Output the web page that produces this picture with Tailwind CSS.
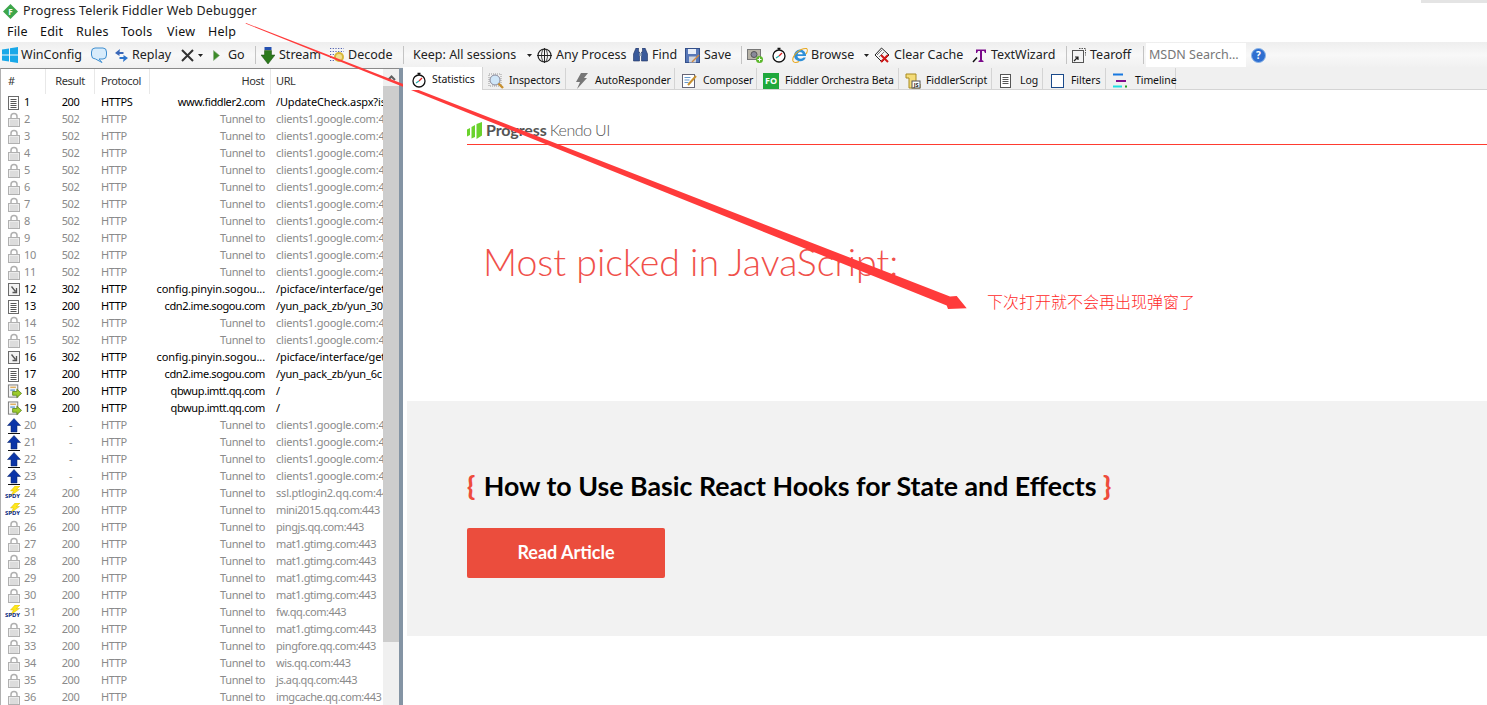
<!DOCTYPE html>
<html lang="en">
<head>
<meta charset="utf-8">
<title>Progress Telerik Fiddler Web Debugger</title>
<script src="https://cdn.jsdelivr.net/npm/@tailwindcss/browser@4"></script>
</head>
<body class="relative w-[1487px] h-[705px] overflow-hidden bg-white font-['Noto_Sans',sans-serif] text-black">
<svg class="absolute w-0 h-0" aria-hidden="true">
  <defs>
    <symbol id="doc" viewBox="0 0 14 14"><rect x="1.5" y="0.5" width="10" height="13" fill="#fff" stroke="#6b6b6b"/><path d="M3.5 3.5h6M3.5 5.5h6M3.5 7.5h6M3.5 9.5h6M3.5 11.5h6" stroke="#555"/></symbol>
    <symbol id="lock" viewBox="0 0 14 15"><path d="M4 7V4.500a3 3 0 0 1 6 0V7" fill="none" stroke="#b0b0b0" stroke-width="1.500"/><rect x="1.500" y="6.500" width="11" height="8" fill="#ececec" stroke="#b0b0b0"/><path d="M3 9h8M3 11h8M3 13h8" stroke="#cccccc"/></symbol>
    <symbol id="redir" viewBox="0 0 14 14"><rect x="1.500" y="0.500" width="11" height="12" fill="#f2f2f2" stroke="#6b6b6b"/><path d="M4.500 3.500 8.500 8.500M9.500 5v4.500H5.500" fill="none" stroke="#555" stroke-width="1.300"/></symbol>
    <symbol id="post" viewBox="0 0 16 15"><rect x="1.500" y="0.500" width="10" height="13" fill="#f4f4f4" stroke="#777"/><path d="M3.500 3h6" stroke="#e0b060" stroke-width="1.500"/><path d="M3.500 6h5" stroke="#6aa0d8" stroke-width="1.500"/><path d="M6 7.500h4.500V5l5 4.500-5 4.500v-2.500H6z" fill="#9ccc2c" stroke="#527a10" stroke-width=".8"/></symbol>
    <symbol id="up" viewBox="0 0 14 16"><path d="M7 0.500 13.500 7.500H10V14H4V7.500H0.500z" fill="#0b35a8" stroke="#06205f" stroke-width=".5"/><path d="M1 15.500h12" stroke="#111"/></symbol>
    <symbol id="bolt" viewBox="0 0 14 10"><path d="M8 0 13 0 9.500 3.500 12.500 3.500 3.500 10 6.500 5 3.500 5z" fill="#ffe81a" stroke="#caa800" stroke-width=".4"/></symbol>
    <symbol id="clock" viewBox="0 0 16 16"><circle cx="8" cy="9" r="6" fill="#fff" stroke="#111" stroke-width="1.300"/><path d="M6.500 1.500h3M8 1.500V3" stroke="#111" stroke-width="1.300"/><path d="M8 9 11 6" stroke="#d22" stroke-width="1.200"/><path d="M8 9 5 11" stroke="#2aa" stroke-width="1.200"/></symbol>
  </defs>
</svg>

<header class="h-[22px] flex items-center pl-[3px] pt-px">
  <svg class="w-[15px] h-[15px] shrink-0" viewBox="0 0 15 15"><path d="M7.500 0 15 7.500 7.500 15 0 7.500z" fill="#3da64a"/><text x="7.500" y="10.500" font-size="8" font-weight="700" fill="#fff" text-anchor="middle">F</text></svg>
  <span class="ml-[5px] text-[12.5px] tracking-[0.13px] whitespace-nowrap text-[#222]">Progress Telerik Fiddler Web Debugger</span>
</header>

<nav class="h-[20px] flex items-center pt-px text-[12.5px] tracking-[0.2px] text-[#111]">
  <span class="ml-[7px] w-[33px]">File</span>
  <span class="w-[36px]">Edit</span>
  <span class="w-[45px]">Rules</span>
  <span class="w-[46px]">Tools</span>
  <span class="w-[41px]">View</span>
  <span>Help</span>
</nav>

<div class="h-[26px] flex items-center bg-gradient-to-b from-[#eeeeee] via-[#f8f8f8] to-[#f0f0f0] text-[12.5px] tracking-[0px] text-[#222] whitespace-nowrap">
  <svg class="ml-[2px] w-[16px] h-[16px] shrink-0" viewBox="0 0 16 16"><path d="M0 2.500 7 1.500V7.500H0zM8 1.300 16 0V7.500H8zM0 8.500H7V14.500L0 13.500zM8 8.500H16V16L8 14.700z" fill="#19a8e8"/></svg>
  <span class="ml-[3px] w-[60px]">WinConfig</span>
  <svg class="ml-[10px] w-[16px] h-[16px] shrink-0" viewBox="0 0 16 16"><path d="M4 1H12Q15.500 1 15.500 5V8Q15.500 12 12 12H8L11 15.500 4.500 12Q.5 12 .5 8V5Q.5 1 4 1z" fill="#d8ecfb" stroke="#3e8ed0"/></svg>
  <svg class="ml-[7px] w-[15px] h-[15px] shrink-0" viewBox="0 0 15 15"><path d="M6 1 1 5l4.500 3V6h4V4H5.500z" fill="#3a68b8"/><path d="M9 14l5-4-4.500-3v2h-4v2h4z" fill="#2c74cc"/></svg>
  <span class="ml-[3px] w-[40px]">Replay</span>
  <svg class="ml-[9px] w-[13px] h-[13px] shrink-0" viewBox="0 0 13 13"><path d="M1 1 12 12M12 1 1 12" stroke="#333" stroke-width="2"/></svg>
  <svg class="ml-[4px] w-[5px] h-[3px] shrink-0" viewBox="0 0 5 3"><path d="M0 0H5L2.500 3z" fill="#222"/></svg>
  <svg class="ml-[10px] w-[7px] h-[11px] shrink-0" viewBox="0 0 7 11"><path d="M0.500 0.500 6.500 5.500 0.500 10.500z" fill="#3c8a28" stroke="#8ab080" stroke-width=".6"/></svg>
  <span class="ml-[8px] w-[17px]">Go</span>
  <span class="ml-[10px] w-px h-[18px] bg-[#c4c4c4] shrink-0"></span>
  <svg class="ml-[5px] w-[14px] h-[17px] shrink-0" viewBox="0 0 14 17"><path d="M3.500 0h7v3h-7z" fill="#2450b0"/><path d="M3.500 3.500h7V8H14L7 17 0 8H3.500z" fill="#2c7a1c" stroke="#1a4a10" stroke-width=".5"/></svg>
  <span class="ml-[4px] w-[42px]">Stream</span>
  <svg class="ml-[8px] w-[16px] h-[16px] shrink-0" viewBox="0 0 16 16"><path d="M1 1.500h14M1 4.500h14M1 7.500h4M1 10.500h4M1 13.500h4" stroke="#5060b0" stroke-width="1.200" stroke-dasharray="1.200 1.500"/><circle cx="10" cy="10" r="5" fill="#d8b83a"/><circle cx="10" cy="10" r="3" fill="#f0e090"/></svg>
  <span class="ml-[3px] w-[45px]">Decode</span>
  <span class="ml-[10px] w-px h-[18px] bg-[#c4c4c4] shrink-0"></span>
  <span class="ml-[9px] w-[105px]">Keep: All sessions</span>
  <svg class="ml-[9px] w-[5px] h-[3px] shrink-0" viewBox="0 0 5 3"><path d="M0 0H5L2.500 3z" fill="#222"/></svg>
  <svg class="ml-[5px] w-[15px] h-[15px] shrink-0" viewBox="0 0 15 15"><circle cx="7.500" cy="7.500" r="6.500" fill="none" stroke="#222" stroke-width="1.200"/><path d="M0 7.500h15M7.500 0v15" stroke="#222"/><ellipse cx="7.500" cy="7.500" rx="3" ry="6.500" fill="none" stroke="#222" stroke-width=".8"/></svg>
  <span class="ml-[4px] w-[71px]">Any Process</span>
  <svg class="ml-[6px] w-[15px] h-[14px] shrink-0" viewBox="0 0 15 14"><path d="M3 0h2.500v4H6.500V13H.5V6zM12 0H9.500v4H8.500V13h6V6z" fill="#3a5a9a" stroke="#1e3060" stroke-width=".6"/><path d="M6.500 5h2v3h-2z" fill="#9ab"/></svg>
  <span class="ml-[4px] w-[24px]">Find</span>
  <svg class="ml-[9px] w-[15px] h-[15px] shrink-0" viewBox="0 0 15 15"><rect x=".5" y=".5" width="14" height="14" fill="#5878b8" stroke="#34508a"/><rect x="3" y="1" width="8" height="5" fill="#e8eef8"/><rect x="4" y="8.500" width="7" height="6" fill="#d0d4dc"/><path d="M7 14l7-7" stroke="#c84" stroke-width="1.400"/></svg>
  <span class="ml-[4px] w-[27px]">Save</span>
  <span class="ml-[10px] w-px h-[18px] bg-[#c4c4c4] shrink-0"></span>
  <svg class="ml-[5px] w-[16px] h-[16px] shrink-0" viewBox="0 0 16 16"><rect x=".5" y="2.500" width="13" height="10" fill="#b8b4a8" stroke="#777"/><circle cx="7" cy="7.500" r="3" fill="#889" stroke="#555"/><circle cx="12.500" cy="12.500" r="3.500" fill="#5cb82c"/><path d="M10.500 12.500h4M12.500 10.500v4" stroke="#fff"/></svg>
  <svg class="ml-[8px] w-[16px] h-[16px] shrink-0"><use href="#clock"/></svg>
  <svg class="ml-[5px] w-[16px] h-[16px] shrink-0" viewBox="0 0 16 16"><path d="M8 2.500a6 6 0 0 1 6 6.500H5.500c0 3 4 3.500 6 1.500h2.300A6.200 6.200 0 0 1 2 9c0-3.500 2.800-6.500 6-6.500z" fill="#2f90d8"/><path d="M5.700 7.300h5c-.3-2.600-4.400-2.600-5 0z" fill="#fff"/><path d="M1 14C-.5 9 8 1 14.500 1.500c1.500 1 .5 4-.5 5.500M1 14c1 2 4 1.500 6 .5" fill="none" stroke="#e8a820" stroke-width="1.100"/></svg>
  <span class="ml-[3px] w-[44px]">Browse</span>
  <svg class="ml-[9px] w-[5px] h-[3px] shrink-0" viewBox="0 0 5 3"><path d="M0 0H5L2.500 3z" fill="#222"/></svg>
  <svg class="ml-[5px] w-[16px] h-[16px] shrink-0" viewBox="0 0 16 16"><path d="M7.500 1 15 8 8 15 1 8z" fill="#f4f4f4" stroke="#222"/><path d="M3 8l5-5M5 10l5-5" stroke="#777"/><path d="M7 8l7 7M14 8l-7 7" stroke="#d01818" stroke-width="2"/></svg>
  <span class="ml-[4px] w-[69px]">Clear Cache</span>
  <svg class="ml-[9px] w-[15px] h-[15px] shrink-0" viewBox="0 0 15 15"><path d="M4 1.500h10V5h-1L12 3h-2v9l1.500 1v1H6.500v-1L8 12V3H6L5 5H4z" fill="#7a0a8a"/><path d="M5 9.500 1 14" stroke="#111" stroke-width="1.500"/></svg>
  <span class="ml-[4px] w-[64px]">TextWizard</span>
  <span class="ml-[11px] w-px h-[18px] bg-[#c4c4c4] shrink-0"></span>
  <svg class="ml-[5px] w-[14px] h-[15px] shrink-0" viewBox="0 0 14 15"><rect x=".5" y="2.500" width="11" height="12" fill="#f4f4f4" stroke="#555"/><path d="M7 .5h6.500v7" fill="none" stroke="#555" stroke-dasharray="1.500 1"/><path d="M2 13 6 9M3 9h3v3" fill="none" stroke="#222" stroke-width="1.200"/></svg>
  <span class="ml-[4px] w-[43px]">Tearoff</span>
  <span class="ml-[10px] w-px h-[18px] bg-[#c4c4c4] shrink-0"></span>
  <span class="ml-[2px] w-[100px] h-[24px] leading-[24px] bg-white pl-[3px] text-[#777]">MSDN Search...</span>
  <svg class="ml-[5px] w-[15px] h-[15px] shrink-0" viewBox="0 0 15 15"><circle cx="7.500" cy="7.500" r="7" fill="#2f6fd0" stroke="#8ab4e8"/><text x="7.500" y="11" font-size="10" font-weight="700" fill="#fff" text-anchor="middle">?</text></svg>
</div>

<main class="h-[637px] flex">
  <section class="w-[399px] shrink-0 flex flex-col border-t border-t-[#8a8a8a] border-l border-l-[#b0b0b0] relative overflow-hidden text-[11px] tracking-[-0.4px]">
    <div class="h-[25px] shrink-0 grid grid-cols-[45px_49px_55px_121px_112px] items-center text-[#333]">
      <span class="pl-[7px] h-full flex items-center border-r border-[#e8e8e8]">#</span>
      <span class="h-full flex items-center justify-center border-r border-[#e8e8e8]">Result</span>
      <span class="pl-[6px] h-full flex items-center border-r border-[#e8e8e8]">Protocol</span>
      <span class="pr-[6px] h-full flex items-center justify-end border-r border-[#e8e8e8]">Host</span>
      <span class="pl-[5px]">URL</span>
    </div>
    <div class="flex-1 w-[382px] overflow-hidden">
      <div class="h-[17px] grid grid-cols-[45px_49px_55px_121px_112px] items-center whitespace-nowrap"><span class="flex items-center pl-[6px]"><svg class="w-[14px] h-[14px] shrink-0"><use href="#doc"/></svg><span class="ml-[3px]">1</span></span><span class="text-center">200</span><span class="pl-[6px]">HTTPS</span><span class="pr-[6px] text-right">www.fiddler2.com</span><span class="pl-[5px] overflow-hidden tracking-[-0.15px]">/UpdateCheck.aspx?isBeta=False</span></div>
      <div class="h-[17px] grid grid-cols-[45px_49px_55px_121px_112px] items-center whitespace-nowrap text-[#8a8a8a]"><span class="flex items-center pl-[6px]"><svg class="w-[14px] h-[15px] shrink-0"><use href="#lock"/></svg><span class="ml-[3px]">2</span></span><span class="text-center">502</span><span class="pl-[6px]">HTTP</span><span class="pr-[6px] text-right">Tunnel to</span><span class="pl-[5px] overflow-hidden tracking-[-0.2px]">clients1.google.com:443</span></div>
      <div class="h-[17px] grid grid-cols-[45px_49px_55px_121px_112px] items-center whitespace-nowrap text-[#8a8a8a]"><span class="flex items-center pl-[6px]"><svg class="w-[14px] h-[15px] shrink-0"><use href="#lock"/></svg><span class="ml-[3px]">3</span></span><span class="text-center">502</span><span class="pl-[6px]">HTTP</span><span class="pr-[6px] text-right">Tunnel to</span><span class="pl-[5px] overflow-hidden tracking-[-0.2px]">clients1.google.com:443</span></div>
      <div class="h-[17px] grid grid-cols-[45px_49px_55px_121px_112px] items-center whitespace-nowrap text-[#8a8a8a]"><span class="flex items-center pl-[6px]"><svg class="w-[14px] h-[15px] shrink-0"><use href="#lock"/></svg><span class="ml-[3px]">4</span></span><span class="text-center">502</span><span class="pl-[6px]">HTTP</span><span class="pr-[6px] text-right">Tunnel to</span><span class="pl-[5px] overflow-hidden tracking-[-0.2px]">clients1.google.com:443</span></div>
      <div class="h-[17px] grid grid-cols-[45px_49px_55px_121px_112px] items-center whitespace-nowrap text-[#8a8a8a]"><span class="flex items-center pl-[6px]"><svg class="w-[14px] h-[15px] shrink-0"><use href="#lock"/></svg><span class="ml-[3px]">5</span></span><span class="text-center">502</span><span class="pl-[6px]">HTTP</span><span class="pr-[6px] text-right">Tunnel to</span><span class="pl-[5px] overflow-hidden tracking-[-0.2px]">clients1.google.com:443</span></div>
      <div class="h-[17px] grid grid-cols-[45px_49px_55px_121px_112px] items-center whitespace-nowrap text-[#8a8a8a]"><span class="flex items-center pl-[6px]"><svg class="w-[14px] h-[15px] shrink-0"><use href="#lock"/></svg><span class="ml-[3px]">6</span></span><span class="text-center">502</span><span class="pl-[6px]">HTTP</span><span class="pr-[6px] text-right">Tunnel to</span><span class="pl-[5px] overflow-hidden tracking-[-0.2px]">clients1.google.com:443</span></div>
      <div class="h-[17px] grid grid-cols-[45px_49px_55px_121px_112px] items-center whitespace-nowrap text-[#8a8a8a]"><span class="flex items-center pl-[6px]"><svg class="w-[14px] h-[15px] shrink-0"><use href="#lock"/></svg><span class="ml-[3px]">7</span></span><span class="text-center">502</span><span class="pl-[6px]">HTTP</span><span class="pr-[6px] text-right">Tunnel to</span><span class="pl-[5px] overflow-hidden tracking-[-0.2px]">clients1.google.com:443</span></div>
      <div class="h-[17px] grid grid-cols-[45px_49px_55px_121px_112px] items-center whitespace-nowrap text-[#8a8a8a]"><span class="flex items-center pl-[6px]"><svg class="w-[14px] h-[15px] shrink-0"><use href="#lock"/></svg><span class="ml-[3px]">8</span></span><span class="text-center">502</span><span class="pl-[6px]">HTTP</span><span class="pr-[6px] text-right">Tunnel to</span><span class="pl-[5px] overflow-hidden tracking-[-0.2px]">clients1.google.com:443</span></div>
      <div class="h-[17px] grid grid-cols-[45px_49px_55px_121px_112px] items-center whitespace-nowrap text-[#8a8a8a]"><span class="flex items-center pl-[6px]"><svg class="w-[14px] h-[15px] shrink-0"><use href="#lock"/></svg><span class="ml-[3px]">9</span></span><span class="text-center">502</span><span class="pl-[6px]">HTTP</span><span class="pr-[6px] text-right">Tunnel to</span><span class="pl-[5px] overflow-hidden tracking-[-0.2px]">clients1.google.com:443</span></div>
      <div class="h-[17px] grid grid-cols-[45px_49px_55px_121px_112px] items-center whitespace-nowrap text-[#8a8a8a]"><span class="flex items-center pl-[6px]"><svg class="w-[14px] h-[15px] shrink-0"><use href="#lock"/></svg><span class="ml-[3px]">10</span></span><span class="text-center">502</span><span class="pl-[6px]">HTTP</span><span class="pr-[6px] text-right">Tunnel to</span><span class="pl-[5px] overflow-hidden tracking-[-0.2px]">clients1.google.com:443</span></div>
      <div class="h-[17px] grid grid-cols-[45px_49px_55px_121px_112px] items-center whitespace-nowrap text-[#8a8a8a]"><span class="flex items-center pl-[6px]"><svg class="w-[14px] h-[15px] shrink-0"><use href="#lock"/></svg><span class="ml-[3px]">11</span></span><span class="text-center">502</span><span class="pl-[6px]">HTTP</span><span class="pr-[6px] text-right">Tunnel to</span><span class="pl-[5px] overflow-hidden tracking-[-0.2px]">clients1.google.com:443</span></div>
      <div class="h-[17px] grid grid-cols-[45px_49px_55px_121px_112px] items-center whitespace-nowrap"><span class="flex items-center pl-[6px]"><svg class="w-[14px] h-[14px] shrink-0"><use href="#redir"/></svg><span class="ml-[3px]">12</span></span><span class="text-center">302</span><span class="pl-[6px]">HTTP</span><span class="pr-[6px] text-right tracking-[-0.1px]">config.pinyin.sogou...</span><span class="pl-[5px] overflow-hidden tracking-[-0.1px]">/picface/interface/get_info</span></div>
      <div class="h-[17px] grid grid-cols-[45px_49px_55px_121px_112px] items-center whitespace-nowrap"><span class="flex items-center pl-[6px]"><svg class="w-[14px] h-[14px] shrink-0"><use href="#doc"/></svg><span class="ml-[3px]">13</span></span><span class="text-center">200</span><span class="pl-[6px]">HTTP</span><span class="pr-[6px] text-right">cdn2.ime.sogou.com</span><span class="pl-[5px] overflow-hidden tracking-[-0.15px]">/yun_pack_zb/yun_30a1b2c4</span></div>
      <div class="h-[17px] grid grid-cols-[45px_49px_55px_121px_112px] items-center whitespace-nowrap text-[#8a8a8a]"><span class="flex items-center pl-[6px]"><svg class="w-[14px] h-[15px] shrink-0"><use href="#lock"/></svg><span class="ml-[3px]">14</span></span><span class="text-center">502</span><span class="pl-[6px]">HTTP</span><span class="pr-[6px] text-right">Tunnel to</span><span class="pl-[5px] overflow-hidden tracking-[-0.2px]">clients1.google.com:443</span></div>
      <div class="h-[17px] grid grid-cols-[45px_49px_55px_121px_112px] items-center whitespace-nowrap text-[#8a8a8a]"><span class="flex items-center pl-[6px]"><svg class="w-[14px] h-[15px] shrink-0"><use href="#lock"/></svg><span class="ml-[3px]">15</span></span><span class="text-center">502</span><span class="pl-[6px]">HTTP</span><span class="pr-[6px] text-right">Tunnel to</span><span class="pl-[5px] overflow-hidden tracking-[-0.2px]">clients1.google.com:443</span></div>
      <div class="h-[17px] grid grid-cols-[45px_49px_55px_121px_112px] items-center whitespace-nowrap"><span class="flex items-center pl-[6px]"><svg class="w-[14px] h-[14px] shrink-0"><use href="#redir"/></svg><span class="ml-[3px]">16</span></span><span class="text-center">302</span><span class="pl-[6px]">HTTP</span><span class="pr-[6px] text-right tracking-[-0.1px]">config.pinyin.sogou...</span><span class="pl-[5px] overflow-hidden tracking-[-0.1px]">/picface/interface/get_info</span></div>
      <div class="h-[17px] grid grid-cols-[45px_49px_55px_121px_112px] items-center whitespace-nowrap"><span class="flex items-center pl-[6px]"><svg class="w-[14px] h-[14px] shrink-0"><use href="#doc"/></svg><span class="ml-[3px]">17</span></span><span class="text-center">200</span><span class="pl-[6px]">HTTP</span><span class="pr-[6px] text-right">cdn2.ime.sogou.com</span><span class="pl-[5px] overflow-hidden tracking-[-0.15px]">/yun_pack_zb/yun_6c1d2e3f</span></div>
      <div class="h-[17px] grid grid-cols-[45px_49px_55px_121px_112px] items-center whitespace-nowrap"><span class="flex items-center pl-[6px]"><svg class="w-[15px] h-[15px] shrink-0"><use href="#post"/></svg><span class="ml-[2px]">18</span></span><span class="text-center">200</span><span class="pl-[6px]">HTTP</span><span class="pr-[6px] text-right">qbwup.imtt.qq.com</span><span class="pl-[5px] overflow-hidden">/</span></div>
      <div class="h-[17px] grid grid-cols-[45px_49px_55px_121px_112px] items-center whitespace-nowrap"><span class="flex items-center pl-[6px]"><svg class="w-[15px] h-[15px] shrink-0"><use href="#post"/></svg><span class="ml-[2px]">19</span></span><span class="text-center">200</span><span class="pl-[6px]">HTTP</span><span class="pr-[6px] text-right">qbwup.imtt.qq.com</span><span class="pl-[5px] overflow-hidden">/</span></div>
      <div class="h-[17px] grid grid-cols-[45px_49px_55px_121px_112px] items-center whitespace-nowrap text-[#8a8a8a]"><span class="flex items-center pl-[6px]"><svg class="w-[14px] h-[16px] shrink-0"><use href="#up"/></svg><span class="ml-[3px]">20</span></span><span class="text-center">-</span><span class="pl-[6px]">HTTP</span><span class="pr-[6px] text-right">Tunnel to</span><span class="pl-[5px] overflow-hidden tracking-[-0.2px]">clients1.google.com:443</span></div>
      <div class="h-[17px] grid grid-cols-[45px_49px_55px_121px_112px] items-center whitespace-nowrap text-[#8a8a8a]"><span class="flex items-center pl-[6px]"><svg class="w-[14px] h-[16px] shrink-0"><use href="#up"/></svg><span class="ml-[3px]">21</span></span><span class="text-center">-</span><span class="pl-[6px]">HTTP</span><span class="pr-[6px] text-right">Tunnel to</span><span class="pl-[5px] overflow-hidden tracking-[-0.2px]">clients1.google.com:443</span></div>
      <div class="h-[17px] grid grid-cols-[45px_49px_55px_121px_112px] items-center whitespace-nowrap text-[#8a8a8a]"><span class="flex items-center pl-[6px]"><svg class="w-[14px] h-[16px] shrink-0"><use href="#up"/></svg><span class="ml-[3px]">22</span></span><span class="text-center">-</span><span class="pl-[6px]">HTTP</span><span class="pr-[6px] text-right">Tunnel to</span><span class="pl-[5px] overflow-hidden tracking-[-0.2px]">clients1.google.com:443</span></div>
      <div class="h-[17px] grid grid-cols-[45px_49px_55px_121px_112px] items-center whitespace-nowrap text-[#8a8a8a]"><span class="flex items-center pl-[6px]"><svg class="w-[14px] h-[16px] shrink-0"><use href="#up"/></svg><span class="ml-[3px]">23</span></span><span class="text-center">-</span><span class="pl-[6px]">HTTP</span><span class="pr-[6px] text-right">Tunnel to</span><span class="pl-[5px] overflow-hidden tracking-[-0.2px]">clients1.google.com:443</span></div>
      <div class="h-[17px] grid grid-cols-[45px_49px_55px_121px_112px] items-center whitespace-nowrap text-[#8a8a8a]"><span class="flex items-center pl-[4px]"><span class="relative w-[17px] h-[15px] shrink-0"><svg class="absolute left-[2px] top-0 w-[14px] h-[10px]"><use href="#bolt"/></svg><span class="absolute left-0 top-[5px] text-[6px] leading-[10px] tracking-normal font-bold text-[#0a2a80]">SPDY</span></span><span class="ml-[2px]">24</span></span><span class="text-center">200</span><span class="pl-[6px]">HTTP</span><span class="pr-[6px] text-right">Tunnel to</span><span class="pl-[5px] overflow-hidden tracking-[-0.2px]">ssl.ptlogin2.qq.com:443</span></div>
      <div class="h-[17px] grid grid-cols-[45px_49px_55px_121px_112px] items-center whitespace-nowrap text-[#8a8a8a]"><span class="flex items-center pl-[4px]"><span class="relative w-[17px] h-[15px] shrink-0"><svg class="absolute left-[2px] top-0 w-[14px] h-[10px]"><use href="#bolt"/></svg><span class="absolute left-0 top-[5px] text-[6px] leading-[10px] tracking-normal font-bold text-[#0a2a80]">SPDY</span></span><span class="ml-[2px]">25</span></span><span class="text-center">200</span><span class="pl-[6px]">HTTP</span><span class="pr-[6px] text-right">Tunnel to</span><span class="pl-[5px] overflow-hidden">mini2015.qq.com:443</span></div>
      <div class="h-[17px] grid grid-cols-[45px_49px_55px_121px_112px] items-center whitespace-nowrap text-[#8a8a8a]"><span class="flex items-center pl-[6px]"><svg class="w-[14px] h-[15px] shrink-0"><use href="#lock"/></svg><span class="ml-[3px]">26</span></span><span class="text-center">200</span><span class="pl-[6px]">HTTP</span><span class="pr-[6px] text-right">Tunnel to</span><span class="pl-[5px] overflow-hidden">pingjs.qq.com:443</span></div>
      <div class="h-[17px] grid grid-cols-[45px_49px_55px_121px_112px] items-center whitespace-nowrap text-[#8a8a8a]"><span class="flex items-center pl-[6px]"><svg class="w-[14px] h-[15px] shrink-0"><use href="#lock"/></svg><span class="ml-[3px]">27</span></span><span class="text-center">200</span><span class="pl-[6px]">HTTP</span><span class="pr-[6px] text-right">Tunnel to</span><span class="pl-[5px] overflow-hidden">mat1.gtimg.com:443</span></div>
      <div class="h-[17px] grid grid-cols-[45px_49px_55px_121px_112px] items-center whitespace-nowrap text-[#8a8a8a]"><span class="flex items-center pl-[6px]"><svg class="w-[14px] h-[15px] shrink-0"><use href="#lock"/></svg><span class="ml-[3px]">28</span></span><span class="text-center">200</span><span class="pl-[6px]">HTTP</span><span class="pr-[6px] text-right">Tunnel to</span><span class="pl-[5px] overflow-hidden">mat1.gtimg.com:443</span></div>
      <div class="h-[17px] grid grid-cols-[45px_49px_55px_121px_112px] items-center whitespace-nowrap text-[#8a8a8a]"><span class="flex items-center pl-[6px]"><svg class="w-[14px] h-[15px] shrink-0"><use href="#lock"/></svg><span class="ml-[3px]">29</span></span><span class="text-center">200</span><span class="pl-[6px]">HTTP</span><span class="pr-[6px] text-right">Tunnel to</span><span class="pl-[5px] overflow-hidden">mat1.gtimg.com:443</span></div>
      <div class="h-[17px] grid grid-cols-[45px_49px_55px_121px_112px] items-center whitespace-nowrap text-[#8a8a8a]"><span class="flex items-center pl-[6px]"><svg class="w-[14px] h-[15px] shrink-0"><use href="#lock"/></svg><span class="ml-[3px]">30</span></span><span class="text-center">200</span><span class="pl-[6px]">HTTP</span><span class="pr-[6px] text-right">Tunnel to</span><span class="pl-[5px] overflow-hidden">mat1.gtimg.com:443</span></div>
      <div class="h-[17px] grid grid-cols-[45px_49px_55px_121px_112px] items-center whitespace-nowrap text-[#8a8a8a]"><span class="flex items-center pl-[4px]"><span class="relative w-[17px] h-[15px] shrink-0"><svg class="absolute left-[2px] top-0 w-[14px] h-[10px]"><use href="#bolt"/></svg><span class="absolute left-0 top-[5px] text-[6px] leading-[10px] tracking-normal font-bold text-[#0a2a80]">SPDY</span></span><span class="ml-[2px]">31</span></span><span class="text-center">200</span><span class="pl-[6px]">HTTP</span><span class="pr-[6px] text-right">Tunnel to</span><span class="pl-[5px] overflow-hidden">fw.qq.com:443</span></div>
      <div class="h-[17px] grid grid-cols-[45px_49px_55px_121px_112px] items-center whitespace-nowrap text-[#8a8a8a]"><span class="flex items-center pl-[6px]"><svg class="w-[14px] h-[15px] shrink-0"><use href="#lock"/></svg><span class="ml-[3px]">32</span></span><span class="text-center">200</span><span class="pl-[6px]">HTTP</span><span class="pr-[6px] text-right">Tunnel to</span><span class="pl-[5px] overflow-hidden">mat1.gtimg.com:443</span></div>
      <div class="h-[17px] grid grid-cols-[45px_49px_55px_121px_112px] items-center whitespace-nowrap text-[#8a8a8a]"><span class="flex items-center pl-[6px]"><svg class="w-[14px] h-[15px] shrink-0"><use href="#lock"/></svg><span class="ml-[3px]">33</span></span><span class="text-center">200</span><span class="pl-[6px]">HTTP</span><span class="pr-[6px] text-right">Tunnel to</span><span class="pl-[5px] overflow-hidden">pingfore.qq.com:443</span></div>
      <div class="h-[17px] grid grid-cols-[45px_49px_55px_121px_112px] items-center whitespace-nowrap text-[#8a8a8a]"><span class="flex items-center pl-[6px]"><svg class="w-[14px] h-[15px] shrink-0"><use href="#lock"/></svg><span class="ml-[3px]">34</span></span><span class="text-center">200</span><span class="pl-[6px]">HTTP</span><span class="pr-[6px] text-right">Tunnel to</span><span class="pl-[5px] overflow-hidden">wis.qq.com:443</span></div>
      <div class="h-[17px] grid grid-cols-[45px_49px_55px_121px_112px] items-center whitespace-nowrap text-[#8a8a8a]"><span class="flex items-center pl-[6px]"><svg class="w-[14px] h-[15px] shrink-0"><use href="#lock"/></svg><span class="ml-[3px]">35</span></span><span class="text-center">200</span><span class="pl-[6px]">HTTP</span><span class="pr-[6px] text-right">Tunnel to</span><span class="pl-[5px] overflow-hidden">js.aq.qq.com:443</span></div>
      <div class="h-[17px] grid grid-cols-[45px_49px_55px_121px_112px] items-center whitespace-nowrap text-[#8a8a8a]"><span class="flex items-center pl-[6px]"><svg class="w-[14px] h-[15px] shrink-0"><use href="#lock"/></svg><span class="ml-[3px]">36</span></span><span class="text-center">200</span><span class="pl-[6px]">HTTP</span><span class="pr-[6px] text-right">Tunnel to</span><span class="pl-[5px] overflow-hidden">imgcache.qq.com:443</span></div>
    </div>
    <div class="absolute right-0 top-0 bottom-0 w-[16px] bg-[#f0f0f0] flex flex-col">
      <div class="h-[17px] shrink-0 flex items-center justify-center"><svg class="w-[9px] h-[6px]" viewBox="0 0 9 6"><path d="M1 5 4.500 1.500 8 5" fill="none" stroke="#606060" stroke-width="2"/></svg></div>
      <div class="h-[556px] bg-[#cdcdcd]"></div>
    </div>
  </section>
  <div class="w-[4px] shrink-0 bg-[#8494a4]"></div>
  <section class="flex-1 min-w-0 flex flex-col">
    <div class="h-[22px] shrink-0 flex items-end bg-[#f0f0f0] border-b border-[#d4d4d4] text-[10.5px] tracking-[-0.08px] text-[#111] whitespace-nowrap">
      <div class="h-[23px] -mb-px mt-[-2px] pt-[2px] w-[80px] flex items-center bg-white border-r border-[#d4d4d4] pl-[8px] relative z-10"><svg class="w-[16px] h-[16px] shrink-0"><use href="#clock"/></svg><span class="ml-[5px]">Statistics</span></div>
      <div class="h-[21px] pt-[4px] w-[83px] flex items-center border-r border-[#d4d4d4] pl-[5px]"><svg class="w-[16px] h-[16px] shrink-0" viewBox="0 0 16 16"><path d="M1 1h12v12H1z" fill="none" stroke="#999" stroke-dasharray="1 1"/><circle cx="7" cy="7" r="5" fill="#cfe6f8" stroke="#889"/><path d="M10.500 10.500 15 15" stroke="#c89030" stroke-width="2.400"/></svg><span class="ml-[5px]">Inspectors</span></div>
      <div class="h-[21px] pt-[4px] w-[109px] flex items-center border-r border-[#d4d4d4] pl-[9px]"><svg class="w-[14px] h-[16px] shrink-0" viewBox="0 0 14 16"><path d="M6 0h7L9 5h3L2 16l3-7H1z" fill="#777"/></svg><span class="ml-[6px]">AutoResponder</span></div>
      <div class="h-[21px] pt-[4px] w-[82px] flex items-center border-r border-[#d4d4d4] pl-[7px]"><svg class="w-[15px] h-[15px] shrink-0" viewBox="0 0 15 15"><rect x=".5" y="1.500" width="12" height="13" fill="#fff" stroke="#667"/><path d="M2.500 4.500h6M2.500 7h5M2.500 9.500h4" stroke="#69c"/><path d="M6 12 14 3" stroke="#c89030" stroke-width="2"/></svg><span class="ml-[6px]">Composer</span></div>
      <div class="h-[21px] pt-[4px] w-[142px] flex items-center border-r border-[#d4d4d4] pl-[6px]"><span class="w-[16px] h-[16px] shrink-0 bg-[#1fa83c] text-white text-[9px] font-bold leading-[16px] text-center">FO</span><span class="ml-[6px]">Fiddler Orchestra Beta</span></div>
      <div class="h-[21px] pt-[4px] w-[93px] flex items-center border-r border-[#d4d4d4] pl-[6px]"><svg class="w-[16px] h-[16px] shrink-0" viewBox="0 0 16 16"><path d="M1 1h10v10h4v4H4V5H1z" fill="#f4dc78" stroke="#a88a20"/><rect x="7" y="8" width="8" height="7" fill="#fff" stroke="#555"/><text x="11" y="14" font-size="5.500" font-weight="700" text-anchor="middle" fill="#222">JS</text></svg><span class="ml-[5px]">FiddlerScript</span></div>
      <div class="h-[21px] pt-[4px] w-[51px] flex items-center border-r border-[#d4d4d4] pl-[8px]"><svg class="w-[12px] h-[14px] shrink-0" viewBox="0 0 12 14"><rect x=".5" y=".5" width="10" height="13" fill="#fff" stroke="#555"/><path d="M2.500 3.500h6M2.500 5.500h6M2.500 7.500h6M2.500 9.500h6" stroke="#555"/></svg><span class="ml-[8px]">Log</span></div>
      <div class="h-[21px] pt-[4px] w-[63px] flex items-center border-r border-[#d4d4d4] pl-[8px]"><span class="w-[13px] h-[14px] shrink-0 bg-white border border-[#1a4a8a]"></span><span class="ml-[7px]">Filters</span></div>
      <div class="h-[21px] pt-[4px] w-[70px] flex items-center border-r border-[#d4d4d4] pl-[6px]"><svg class="w-[16px] h-[15px] shrink-0" viewBox="0 0 16 15"><path d="M1 1.500h10" stroke="#1878e0" stroke-width="2"/><path d="M4 8h10" stroke="#800a8a" stroke-width="2"/><path d="M1 13.500h9" stroke="#20e0e0" stroke-width="2"/><path d="M13 13.500h2" stroke="#20a020" stroke-width="2"/></svg><span class="ml-[7px]">Timeline</span></div>
    </div>
    <div class="flex-1 pl-[4px] flex flex-col">
      <div class="h-[55px] shrink-0 ml-[60px] flex items-end pb-[6px] relative">
        <svg class="w-[16px] h-[17px] shrink-0" viewBox="0 0 16 17"><path d="M0 7.500 3 6v7l-3 1.500zM4.500 5 8 3v12l-3.500 1.500zM9.500 2 15 0v13.500L9.500 17z" fill="#6ad22c"/></svg>
        <span class="ml-[3px] font-['Lato',sans-serif] text-[16px] leading-[18px] font-bold tracking-[-0.1px] text-[#555]">Progress</span>
        <span class="ml-[3px] font-['Lato',sans-serif] text-[16px] leading-[18px] font-light tracking-[-0.55px] text-[#555]">Kendo UI</span>
        <div class="absolute left-0 right-0 bottom-0 h-px bg-[#ff3b30]"></div>
      </div>
      <h1 class="h-[256px] shrink-0 pl-[76px] pt-[94px] font-['Lato',sans-serif] font-light text-[37.5px] leading-[45px] text-[#f0504a] whitespace-nowrap">Most picked in JavaScript:</h1>
      <div class="h-[235px] shrink-0 bg-[#f2f2f2] pl-[60px] pt-[68px]">
        <h2 class="font-['Lato',sans-serif] font-bold text-[26.75px] leading-[34px] whitespace-nowrap text-black"><span class="text-[#ee4c3c] font-black mr-[2px]">{</span> How to Use Basic React Hooks for State and Effects <span class="text-[#ee4c3c] font-black">}</span></h2>
        <div class="mt-[25px] w-[198px] h-[50px] pb-[2px] bg-[#eb4d3d] rounded-[2px] flex items-center justify-center font-['Lato',sans-serif] font-bold text-[18px] text-white">Read Article</div>
      </div>
    </div>
  </section>
</main>

<div class="absolute right-0 top-0 w-[66px] h-[3px] bg-[#d8d8d8]/70"></div>
<svg class="absolute inset-0 w-[1487px] h-[705px] pointer-events-none" viewBox="0 0 1487 705">
  <path d="M246 23 950 296.500 956.700 296 966.700 308.300 948 309 946.700 305.500 245.500 23.500z" fill="#ff3b3b"/>
</svg>
<div class="absolute left-[987px] top-[290px] font-['Noto_Sans_CJK_SC',sans-serif] font-light text-[16px] leading-[22px] text-[#ff2a2a] whitespace-nowrap">下次打开就不会再出现弹窗了</div>
</body>
</html>
